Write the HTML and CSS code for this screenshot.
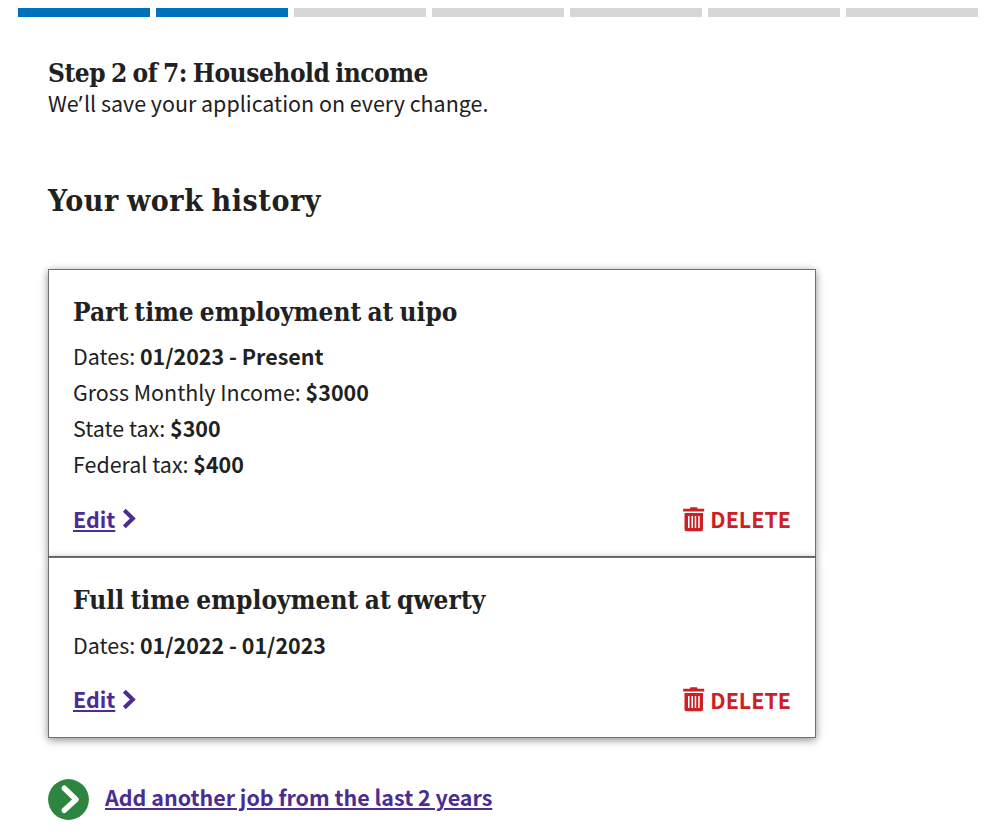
FILE: index.html
```html
<!DOCTYPE html>
<html lang="en">
<head>
<meta charset="utf-8">
<title>Household income</title>
<link rel="stylesheet" href="styles.css">
</head>
<body>
<div class="progress">
  <span class="segment done"></span><span class="segment done"></span><span class="segment"></span><span class="segment"></span><span class="segment"></span><span class="segment"></span><span class="segment"></span>
</div>
<main class="content">
  <h2 class="step-title">Step 2 of 7: Household income</h2>
  <p class="save-note">We<span class="apostrophe">’</span>ll save your application on every change.</p>
  <h1 class="page-title">Your work history</h1>
  <section class="card">
    <h3 class="card-title part-time">Part time employment at uipo</h3>
    <p class="detail">Dates: <b>01/2023 - Present</b></p>
    <p class="detail">Gross Monthly Income: <b>$3000</b></p>
    <p class="detail">State tax: <b>$300</b></p>
    <p class="detail">Federal tax: <b>$400</b></p>
    <div class="actions">
      <a class="edit" href="#"><span class="link-text">Edit</span><svg class="chevron" viewBox="0 0 14 21"><path d="M2.3 2.3L10.8 10.5L2.3 18.7"/></svg></a>
      <button class="delete"><svg class="trash" viewBox="0 0 22 25"><path fill-rule="evenodd" d="M7 1.2Q7 .3 8 .3H13.5Q14.5.3 14.5 1.2V1.7H21.2V4.5H.2V1.7H7ZM1.5 6H20V22.3Q20 24.3 18 24.3H3.5Q1.5 24.3 1.5 22.3ZM5 9V21H6.5V9ZM8.5 9V21H10V9ZM11.7 9V21H13.2V9ZM15.2 9V21H16.7V9Z"/></svg>DELETE</button>
    </div>
  </section>
  <section class="card">
    <h3 class="card-title full-time">Full time employment at qwerty</h3>
    <p class="detail">Dates: <b>01/2022 - 01/2023</b></p>
    <div class="actions">
      <a class="edit" href="#"><span class="link-text">Edit</span><svg class="chevron" viewBox="0 0 14 21"><path d="M2.3 2.3L10.8 10.5L2.3 18.7"/></svg></a>
      <button class="delete"><svg class="trash" viewBox="0 0 22 25"><path fill-rule="evenodd" d="M7 1.2Q7 .3 8 .3H13.5Q14.5.3 14.5 1.2V1.7H21.2V4.5H.2V1.7H7ZM1.5 6H20V22.3Q20 24.3 18 24.3H3.5Q1.5 24.3 1.5 22.3ZM5 9V21H6.5V9ZM8.5 9V21H10V9ZM11.7 9V21H13.2V9ZM15.2 9V21H16.7V9Z"/></svg>DELETE</button>
    </div>
  </section>
  <a class="add-job" href="#"><svg class="add-icon" viewBox="0 0 41 41"><circle cx="20.5" cy="20.5" r="20.4"/><path d="M16.3 9.2L28 20.5L16.3 31.3"/></svg><span class="link-text">Add another job from the last 2 years</span></a>
</main>
</body>
</html>
```
FILE: styles.css
```css
* { box-sizing: border-box; }
body {
  margin: 0;
  padding: 8px 10px 0 18px;
  height: 835px;
  overflow: hidden;
  background: #fff;
  color: #212121;
  font-family: "Noto Sans CJK SC", "Noto Sans", sans-serif;
  font-size: 21.45px;
  line-height: 36px;
}
h1, h2, h3, p { margin: 0; }
.progress { display: grid; grid-template-columns: repeat(7, 1fr); gap: 6px; height: 9px; }
.segment { background: #d6d7d9; }
.segment.done { background: #0071bc; }
.content { width: 768px; margin-left: 30px; padding-top: 39px; }
.step-title, .page-title, .card-title {
  font-family: "DejaVu Serif Condensed", "DejaVu Serif", serif;
  font-stretch: condensed;
  font-weight: 700;
  white-space: nowrap;
  word-spacing: -2px;
}
.step-title { font-size: 26px; line-height: 34px; letter-spacing: -.43px; }
.save-note { line-height: 28px; margin-top: -1px; }
.apostrophe { font-family: "Noto Sans", sans-serif; line-height: 1; letter-spacing: 1.5px; }
.page-title { font-size: 30px; line-height: 40px; margin-top: 64px; margin-bottom: 48px; letter-spacing: .6px; }
.card {
  border: 1px solid #6f6f70;
  background: #fff;
  box-shadow: 0 2px 8px rgba(0, 0, 0, .45);
  padding: 24px 24px 19px;
}
.card-title { font-size: 26px; line-height: 36px; margin-bottom: 8.4px; }
.part-time { letter-spacing: 0; }
.full-time { letter-spacing: .07px; }
b { font-weight: 700; }
.actions { display: flex; justify-content: space-between; align-items: center; height: 36px; margin-top: 19px; }
.edit, .delete, .add-job { display: flex; align-items: center; font-weight: 700; }
.edit { margin-top: -1px; }
.edit, .add-job { color: #4c2c92; text-decoration: none; }
.link-text { text-decoration: underline; text-decoration-thickness: 2px; text-underline-offset: 2px; }
.chevron { width: 14px; height: 21px; margin-left: 6.6px; fill: none; stroke: #4c2c92; stroke-width: 4.1; }
.delete { border: 0; padding: 0; background: none; color: #cd2026; font: inherit; font-weight: 700; }
.trash { width: 22px; height: 25px; margin-right: 5px; fill: #cd2026; }
.add-job { margin-top: 41px; height: 42px; }
.add-job .link-text { margin-top: -5px; }
.add-icon { width: 41px; height: 41px; margin-right: 16px; fill: #2e8540; }
.add-icon path { fill: none; stroke: #fff; stroke-width: 5.4; stroke-linecap: round; stroke-linejoin: round; }
```
